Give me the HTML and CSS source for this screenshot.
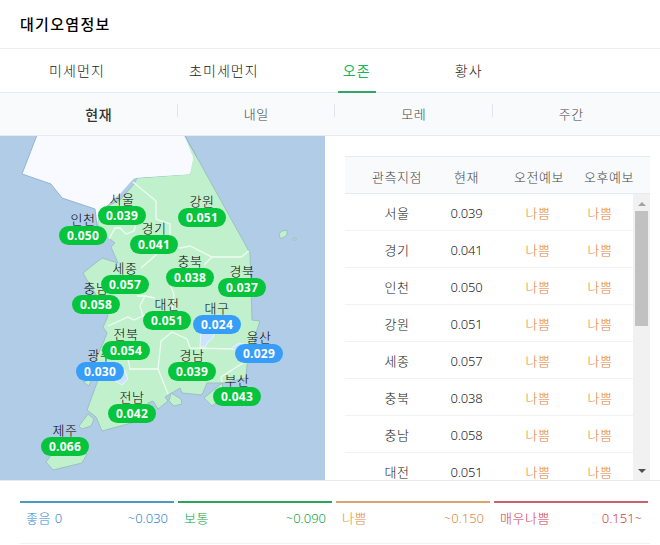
FILE: index.html
```html
<!DOCTYPE html>
<html lang="ko">
<head>
  <meta charset="UTF-8">
  <meta name="viewport" content="width=device-width, initial-scale=1.0">
  <title>대기오염정보</title>
  <link rel="stylesheet" href="styles.css">
</head>
<body>

  <h1 class="title">대기오염정보</h1>

  <ul class="tabs">
    <li>미세먼지</li>
    <li>초미세먼지</li>
    <li class="on">오존</li>
    <li>황사</li>
  </ul>

  <ul class="days">
    <li class="on">현재</li>
    <li>내일</li>
    <li>모레</li>
    <li>주간</li>
  </ul>

  <div class="content">
    <div class="map" id="map">
      <svg width="325" height="344" viewBox="0 0 325 344">
        <!-- south -->
        <g fill="#c0f1cc" stroke="#9cc0c4" stroke-width="1">
          <path d="M134 48 L137 42 L190 38 L184 -2 L250 117 L252 184 L260 185 L255 200 L254 215 L247 229 L246 242 L224 247 L207 247 L202 259 L182 257 L180 252 L165 261 L168 265 L158 273 L153 265 L148 267 L150 276 L135 286 L102 295 L96 281 L87 274 L98 244 L95 225 L104 205 L107 197 L103 191 L108 180 L98 162 L90 149 L83 137 L102 122 L118 127 L111 111 L115 107 L107 101 L98 90 L97 75 L120 64Z"/>
          <path d="M79 290 L88 278 L94 283 L91 290 L82 293Z M46 326 L52 318 L87 318 L82 327 L53 334Z M171 257 L181 263 L182 268 L174 270 L169 265Z M204 262 L222 247 L225 260 L212 270Z M83 246 L92 243 L89 250Z"/>
          <path d="M279 98 L282 95 L287 94 L287 99 L283 102 L280 102Z M293 102 L296 102 L296 104 L293 104Z"/>
        </g>
        <!-- north -->
        <path fill="#f8faff" d="M37 -1 L22 38 L51 48 L62 62 L95 73 L97 90 L99 76 L110 66 L120 58 L134 42 L137 41.500 L190 38 L193 21 L184.500 0 L184.500 -1Z"/>
        <path fill="none" stroke="#f8faff" stroke-width="1.500" d="M98 76 L110 66 L133 42 L137 41 L189 37.500 L192.500 22"/>
        <path fill="none" stroke="#96b5d3" d="M37 -1 L22 38 L51 48 L62 62 L95 73 L97 90 M184 -2 L197 21.500"/>
        <!-- province borders -->
        <g fill="none" stroke="#effcf2" stroke-width="1.300">
          <path d="M133 46 L156 65 L156 83 L170 88 L170 101 M109 103 L115 92 L120 92 L126 98 L134 95 L137 84"/>
          <path d="M141 132 L166 110 L180 112 L190 110 L212 121 L241 121 L249 115 M212 121 L204 129"/>
          <path d="M137 160 L145 160 L140 170 L143 180 L150 185 M145 160 L155 162 M171 151 L174 158 L172 176"/>
          <path d="M108 190 L128 181 L134 184 L145 179 M172 196 L161 205 L158 233 L130 233 L126 212 M158 233 L168 258 M172 196 L187 203 L190 212 L238 213 M222 246 L221 241 L243 227"/>
        </g>
        <!-- metropolitan cities in the good range -->
        <path fill="#cce4fc" stroke="#e8f5fc" d="M200 211 L201 195 L216 195 L212 203 L208 206 L205 211Z M232 212 L239 207 L247 209 L247 216 L238 217Z M114 244 L120 232 L125 235 L128 243 L122 249Z"/>
      </svg>
    </div>

    <div class="list">
      <div class="row head">
        <span>관측지점</span><span>현재</span><span>오전예보</span><span>오후예보</span>
      </div>
      <div class="scroll">
        <div class="rows" id="rows"></div>
        <div class="scrollbar">
          <i class="arrow up"></i>
          <i class="thumb"></i>
          <i class="arrow down"></i>
        </div>
      </div>
    </div>
  </div>

  <ul class="legend">
    <li class="good"><span>좋음 0</span><span>~0.030</span></li>
    <li class="normal"><span>보통</span><span>~0.090</span></li>
    <li class="bad"><span>나쁨</span><span>~0.150</span></li>
    <li class="worst"><span>매우나쁨</span><span>0.151~</span></li>
  </ul>

<script>
  // name, value, x, y on the map
  const cities = [
    ['서울', '0.039', 98, 70],
    ['인천', '0.050', 59, 90],
    ['경기', '0.041', 130, 99],
    ['강원', '0.051', 178, 72],
    ['충남', '0.058', 72, 159],
    ['세종', '0.057', 101, 139],
    ['충북', '0.038', 166, 132],
    ['경북', '0.037', 218, 142],
    ['대전', '0.051', 143, 175],
    ['대구', '0.024', 193, 179],
    ['광주', '0.030', 76, 226],
    ['전북', '0.054', 102, 205],
    ['경남', '0.039', 168, 226],
    ['울산', '0.029', 235, 208],
    ['전남', '0.042', 108, 268],
    ['부산', '0.043', 213, 251],
    ['제주', '0.066', 41, 301]
  ];

  const map = document.getElementById('map');
  cities.forEach(([name, value, x, y]) => {
    const good = parseFloat(value) <= 0.03 ? ' good' : '';
    map.insertAdjacentHTML('beforeend',
      `<div class="pin${good}" style="left:${x}px;top:${y - 16}px"><span>${name}</span><b>${value}</b></div>`);
  });

  const order = ['서울', '경기', '인천', '강원', '세종', '충북', '충남', '대전'];
  document.getElementById('rows').innerHTML = order.map(name => {
    const city = cities.find(c => c[0] === name);
    return `<div class="row"><span>${name}</span><span class="value">${city[1]}</span><span class="bad">나쁨</span><span class="bad">나쁨</span></div>`;
  }).join('');
</script>

</body>
</html>
```
FILE: styles.css
```css
* {
  box-sizing: border-box;
}
body {
  margin: 0;
  height: 545px;
  overflow: hidden;
  background: #fff;
  color: #222;
  font-family: "Noto Sans", "Noto Sans CJK KR", sans-serif;
  font-size: 13px;
  font-weight: 300;
}
ul {
  list-style: none;
  margin: 0;
  padding: 0;
}
.title {
  margin: 0;
  height: 49px;
  padding-left: 20px;
  border-bottom: 1px solid #eceef0;
  font-size: 15px;
  font-weight: 500;
  letter-spacing: 1.3px;
  line-height: 49px;
  color: #000;
}
.tabs {
  display: flex;
  height: 44px;
  padding-left: 44px;
  gap: 74px;
  border-bottom: 1px solid #e6eaed;
  font-size: 14px;
  line-height: 44px;
}
.tabs li {
  height: 44px;
  padding: 0 5px;
  letter-spacing: 1.1px;
}
.tabs .on {
  border-bottom: 2px solid #35a56b;
  color: #19b45b;
  font-weight: 400;
}
.days {
  display: grid;
  grid-template-columns: 20px repeat(4, 157.5px);
  height: 43px;
  background: #f8fafc;
  border-bottom: 1px solid #e4eaf0;
  line-height: 43px;
  letter-spacing: .5px;
  color: #444;
}
.days li {
  position: relative;
  text-align: center;
}
.days li:first-child {
  grid-column: 2;
}
.days li + li::before {
  content: "";
  position: absolute;
  left: -1px;
  top: 11px;
  height: 13px;
  border-left: 1px solid #e1e4e8;
}
.days .on {
  color: #333;
  font-size: 14px;
  font-weight: 500;
}
.content {
  display: flex;
  height: 345px;
  border-bottom: 1px solid #e8ebee;
}
.map {
  position: relative;
  width: 325px;
  height: 344px;
  background: #b0cce6;
  overflow: hidden;
}
.map svg {
  display: block;
}
.pin {
  position: absolute;
  width: 48px;
  text-align: center;
}
.pin span {
  display: block;
  height: 16px;
  line-height: 19px;
  letter-spacing: .6px;
  color: #000;
}
.pin b {
  position: relative;
  display: block;
  height: 19px;
  border-radius: 10px;
  background: #07c43d;
  color: #fff;
  font-size: 12px;
  font-weight: 700;
  letter-spacing: .25px;
  line-height: 19px;
}
.pin.good b {
  background: #369ef8;
}
.list {
  width: 305px;
  height: 324px;
  margin: 20px 0 0 20px;
  overflow: hidden;
}
.row {
  display: grid;
  grid-template-columns: 104px 35px 108px 16px;
  height: 37px;
  border-bottom: 1px solid #f0f2f3;
  line-height: 39px;
  letter-spacing: .6px;
}
.row span {
  display: flex;
  justify-content: center;
  white-space: nowrap;
}
.row .value {
  letter-spacing: -.2px;
}
.row.head {
  grid-template-columns: 104px 35px 110px 30px;
  height: 38px;
  background: #f8fafc;
  border-top: 1px solid #e4eaed;
  border-bottom-color: #e4eaed;
  line-height: 41px;
  color: #444;
}
.rows .bad {
  color: #e07f3c;
}
.scroll {
  display: flex;
  height: 286px;
}
.rows {
  flex: 1;
  height: 286px;
  overflow: hidden;
}
.scrollbar {
  display: flex;
  flex-direction: column;
  align-items: center;
  width: 17px;
  background: #f1f1f1;
}
.arrow {
  margin: 8px 0 5px;
  border: 4px solid transparent;
  border-top: 0;
  border-bottom-color: #a3a3a3;
}
.arrow.down {
  margin: auto 0 7px;
  border-top: 4px solid #505050;
  border-bottom: 0;
}
.thumb {
  width: 13px;
  height: 115px;
  background: #c1c1c1;
}
.legend {
  display: grid;
  grid-template-columns: repeat(4, 154px);
  column-gap: 4px;
  width: 630px;
  height: 43px;
  margin: 20px 0 0 20px;
  border-bottom: 1px solid #f1f2f3;
}
.legend li {
  display: flex;
  justify-content: space-between;
  height: 35px;
  padding: 0 6px;
  border-top: 2px solid;
  line-height: 30px;
}
.legend span:first-child {
  letter-spacing: .5px;
}
.legend .good {
  border-color: #4b9bc0;
  color: #2f86d0;
}
.legend .normal {
  border-color: #2fa25a;
  color: #0c9f3c;
}
.legend .bad {
  border-color: #d9a46e;
  color: #e0883c;
}
.legend .worst {
  border-color: #c8626c;
  color: #d03a48;
}
```
